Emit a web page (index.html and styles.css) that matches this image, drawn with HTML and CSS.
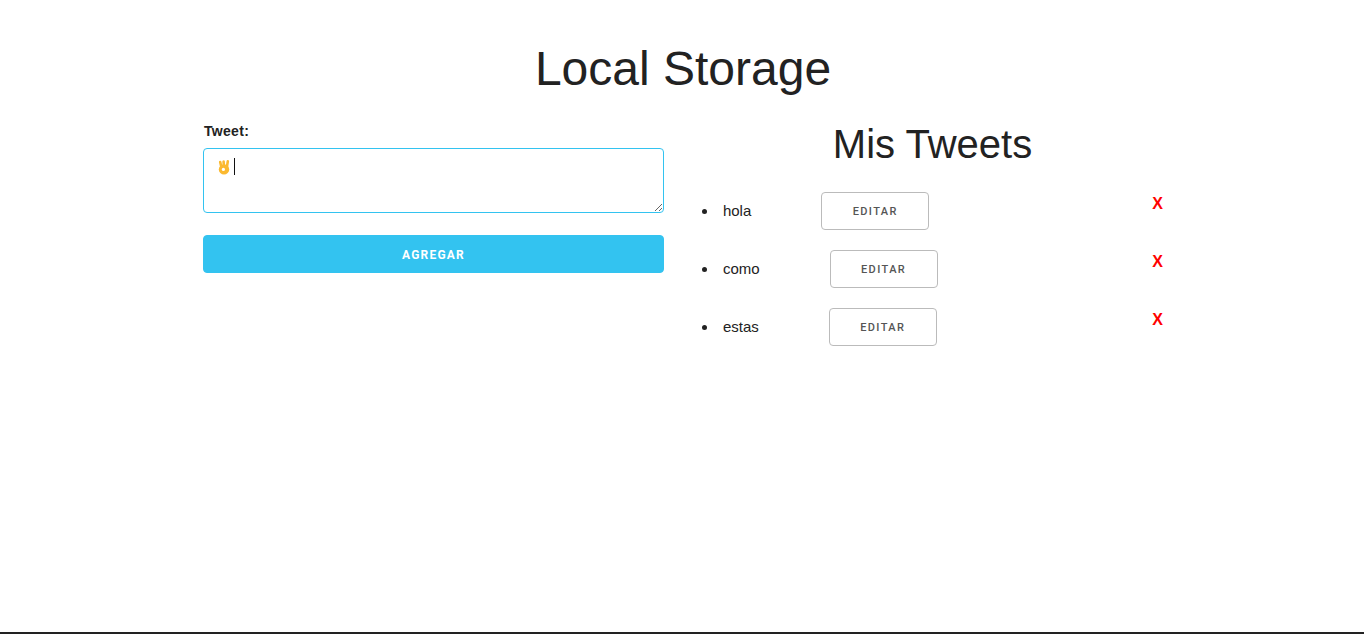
FILE: index.html
```html
<!DOCTYPE html>
<html lang="en">
<head>
    <meta charset="UTF-8">
    <meta name="viewport" content="width=device-width, initial-scale=1.0">
    <title>Local Storage</title>
    <link rel="stylesheet" href="styles.css">
</head>
<body>
    <div class="page">
        <h1 class="page-title">Local Storage</h1>
        <div class="columns">
            <form class="tweet-form">
                <label class="tweet-label" for="tweet">Tweet:</label>
                <div class="textarea-wrap">
                    <textarea id="tweet" class="tweet-input"></textarea>
                    <!-- emoji + caret, no emoji font here -->
                    <span class="typed">
                        <svg class="emoji" width="12" height="16" viewBox="0 0 12 16">
                            <path d="M3 6.5 L2.2 3 M5.8 6 L5.6 2.6 M9 7.5 L9.8 2.4" stroke="#fbb92f" stroke-width="2.6" stroke-linecap="round"/>
                            <circle cx="6" cy="10.4" r="5.2" fill="#fbb92f"/>
                            <circle cx="5.4" cy="10.4" r="1.6" fill="#fff"/>
                        </svg>
                        <span class="caret"></span>
                    </span>
                </div>
                <button type="button" class="add-button">Agregar</button>
            </form>
            <div class="tweets">
                <h2 class="tweets-title">Mis Tweets</h2>
                <ul class="tweet-list">
                    <li>hola<button type="button" class="edit-button">Editar</button><a class="delete">X</a></li>
                    <li>como<button type="button" class="edit-button">Editar</button><a class="delete">X</a></li>
                    <li>estas<button type="button" class="edit-button">Editar</button><a class="delete">X</a></li>
                </ul>
            </div>
        </div>
    </div>
</body>
</html>
```
FILE: styles.css
```css
* {
    box-sizing: border-box;
}
body {
    margin: 0;
    font-family: "Liberation Sans", Arial, sans-serif;
    font-size: 15px;
    color: #222;
    background-color: #fff;
}
.page {
    height: 634px;
    border-bottom: 2px solid #222;
    overflow: hidden;
}
.page-title {
    margin: 0;
    padding: 41px 0 0 2px;
    height: 123px;
    font-size: 48px;
    line-height: 56px;
    font-weight: 400;
    text-align: center;
}
.columns {
    width: 960px;
    margin: 0 auto;
    display: flex;
    justify-content: space-between;
}
.tweet-form {
    width: 461px;
    margin-left: 1px;
}
.tweet-label {
    display: block;
    font-weight: 700;
    font-size: 14px;
    letter-spacing: 0.3px;
    line-height: 17px;
    margin: 0 0 8px 1px;
}
.textarea-wrap {
    position: relative;
    height: 65px;
}
.tweet-input {
    display: block;
    width: 100%;
    height: 65px;
    padding: 6px 10px;
    border: 1px solid #33c3f0;
    border-radius: 4px;
    outline: none;
    background: #fff;
}
.typed {
    position: absolute;
    top: 10px;
    left: 15px;
    display: flex;
    align-items: center;
    gap: 4px;
}
.emoji {
    display: block;
}
.caret {
    width: 1px;
    height: 17px;
    background-color: #111;
}
.add-button {
    display: block;
    width: 100%;
    height: 38px;
    margin-top: 22px;
    padding: 1px 0 0;
    border: 1px solid #33c3f0;
    border-radius: 4px;
    background-color: #33c3f0;
    color: #fff;
    font-family: Roboto, sans-serif;
    font-size: 12px;
    font-weight: 700;
    letter-spacing: 1.2px;
    text-transform: uppercase;
}
.tweets {
    width: 461px;
}
.tweets-title {
    margin: 0;
    padding-left: 2px;
    height: 68px;
    font-size: 40px;
    line-height: 42px;
    font-weight: 400;
    text-align: center;
}
.tweet-list {
    margin: 0;
    padding-left: 1px;
    list-style: none;
}
.tweet-list li {
    margin-bottom: 20px;
    height: 38px;
    line-height: 40px;
    color: #222;
}
.tweet-list li::before {
    content: "";
    display: inline-block;
    width: 5px;
    height: 5px;
    margin-right: 15.9px;
    border-radius: 50%;
    background-color: #222;
    vertical-align: 2px;
}
.edit-button {
    width: 108px;
    height: 38px;
    margin-top: 1px;
    margin-left: 70px;
    padding: 1px 0 0;
    border: 1px solid #bbb;
    border-radius: 4px;
    background: transparent;
    color: #555;
    font-family: Roboto, sans-serif;
    font-size: 11px;
    font-weight: 500;
    letter-spacing: 1.4px;
    text-transform: uppercase;
    vertical-align: top;
}
.delete {
    float: right;
    margin: -7px -1px 0 0;
    color: #f00;
    font-weight: 700;
    font-size: 16px;
}
```
